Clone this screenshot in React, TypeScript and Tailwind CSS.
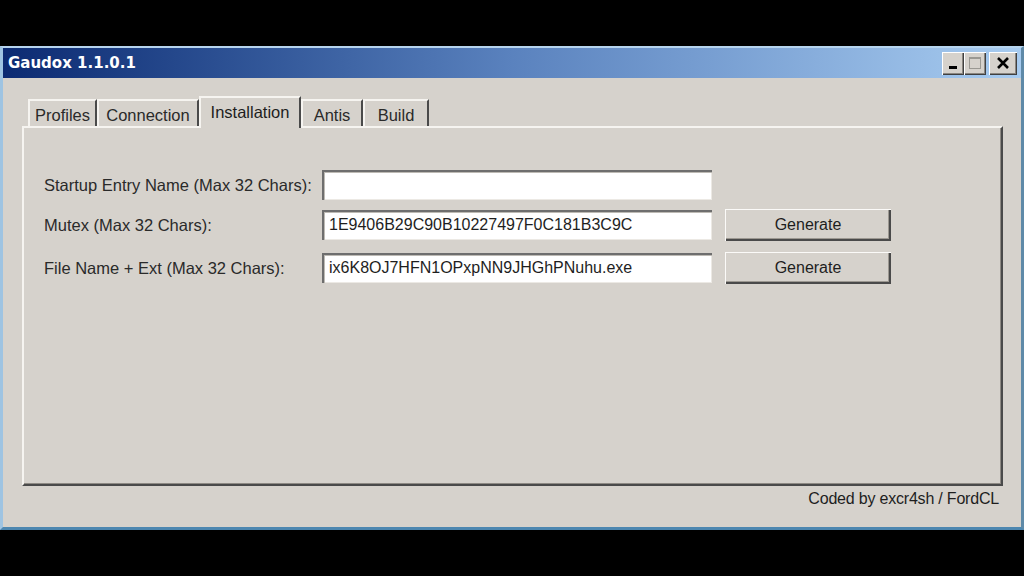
import React from "react";

const font = { fontFamily: '"Liberation Sans", Arial, sans-serif' };

function Tab({ label, w, active }: { label: string; w: number; active?: boolean }) {
  if (active) {
    return (
      <div
        className="relative z-10 flex h-[32px] items-start justify-center bg-[#d6d2cc] pt-[2px] text-[16.5px] text-[#1e1e1e] border-t-2 border-l-2 border-t-[#f6f4f0] border-l-[#f6f4f0] border-r-2 border-r-[#4a4a4a] -mb-[2px]"
        style={{ width: w }}
      >
        {label}
      </div>
    );
  }
  return (
    <div
      className="flex h-[27px] items-start justify-center bg-[#d6d2cc] pt-[2px] text-[16.5px] text-[#2a2a2a] border-t-2 border-l-2 border-t-[#f6f4f0] border-l-[#f6f4f0] border-r-2 border-r-[#4a4a4a]"
      style={{ width: w }}
    >
      {label}
    </div>
  );
}

function Input({ value }: { value: string }) {
  return (
    <div className="flex h-[30px] w-[390px] items-center bg-white pl-[7px] text-[16px] text-[#1e1e1e] shadow-[inset_2px_2px_0_#6e6e6e,inset_3px_3px_0_#bdbab4,inset_-1px_-1px_0_#ece9e4]">
      {value}
    </div>
  );
}

function Button({ label }: { label: string }) {
  return (
    <div className="flex h-[32px] w-[166px] items-center justify-center bg-[#d6d2cc] text-[16px] text-[#1e1e1e] shadow-[inset_1px_1px_0_#fbfaf8,inset_-2px_-2px_0_#4a4a4a,inset_-3px_-3px_0_#9c9891]">
      {label}
    </div>
  );
}

export default function App() {
  return (
    <div className="h-[576px] w-[1024px] overflow-hidden bg-black pt-[46px]" style={font}>
      <div className="flex h-[484px] w-[1024px] flex-col bg-[#d6d2cc] border-l-[3px] border-l-[#9fc4e2] border-r-[3px] border-r-[#5f8aa8] border-t-2 border-t-[#b6d4ee] border-b-[3px] border-b-[#4d87b0]">
        {/* Title bar */}
        <div className="flex h-[30px] shrink-0 items-center bg-gradient-to-r from-[#0c2a72] via-[#5a82be] to-[#a8ccf0] pl-[5px] pr-[4px]">
          <span
            className="text-[15px] font-bold text-white"
            style={{ fontFamily: '"DejaVu Sans", Verdana, sans-serif' }}
          >
            Gaudox 1.1.0.1
          </span>
          <div className="ml-auto flex items-center gap-[0px]">
            <div className="relative h-[23px] w-[22px] bg-[#d6d2cc] shadow-[inset_1px_1px_0_#ffffff,inset_-1px_-1px_0_#404040,inset_-2px_-2px_0_#8a8680]">
              <div className="absolute left-[7px] top-[14px] h-[3px] w-[8px] bg-black" />
            </div>
            <div className="relative h-[23px] w-[22px] bg-[#d6d2cc] shadow-[inset_1px_1px_0_#ffffff,inset_-1px_-1px_0_#404040,inset_-2px_-2px_0_#8a8680]">
              <div className="absolute left-[5px] top-[5px] h-[12px] w-[12px] border border-[#9a9892] border-t-2" />
            </div>
            <div className="ml-[3px] flex h-[23px] w-[28px] items-center justify-center bg-[#d6d2cc] shadow-[inset_1px_1px_0_#ffffff,inset_-1px_-1px_0_#404040,inset_-2px_-2px_0_#8a8680]">
              <svg width="14" height="12" viewBox="0 0 14 12">
                <path d="M2 1 L12 11 M12 1 L2 11" stroke="#000" strokeWidth="2.6" />
              </svg>
            </div>
          </div>
        </div>

        {/* Body */}
        <div className="flex flex-1 flex-col pl-[19px] pr-[18px] pt-[18px]">
          {/* Tabs */}
          <div className="flex items-end pl-[6px]">
            <Tab label="Profiles" w={69} />
            <Tab label="Connection" w={102} />
            <Tab label="Installation" w={102} active />
            <Tab label="Antis" w={62} />
            <Tab label="Build" w={66} />
          </div>
          {/* Tab page */}
          <div className="relative h-[360px] w-[981px] bg-[#d6d2cc] border-t-2 border-l-2 border-t-[#f6f4f0] border-l-[#f6f4f0] border-r-2 border-b-2 border-r-[#4a4a4a] border-b-[#4a4a4a] shadow-[inset_-1px_-1px_0_#8e8a84]">
            <div className="flex flex-col pl-[20px] pt-[42px] text-[16.5px] text-[#2a2a2a]">
              <div className="flex h-[30px] items-center">
                <div className="w-[278px]">Startup Entry Name (Max 32 Chars):</div>
                <Input value="" />
              </div>
              <div className="mt-[9px] flex h-[32px] items-center">
                <div className="w-[278px]">Mutex (Max 32 Chars):</div>
                <Input value="1E9406B29C90B10227497F0C181B3C9C" />
                <div className="ml-[13px]">
                  <Button label="Generate" />
                </div>
              </div>
              <div className="mt-[11px] flex h-[32px] items-center">
                <div className="w-[278px]">File Name + Ext (Max 32 Chars):</div>
                <Input value="ix6K8OJ7HFN1OPxpNN9JHGhPNuhu.exe" />
                <div className="ml-[13px]">
                  <Button label="Generate" />
                </div>
              </div>
            </div>
          </div>
          {/* Footer */}
          <div className="flex justify-end pr-[4px] pt-[1px] text-[16px] tracking-[-0.2px] text-[#1e1e1e]">
            Coded by excr4sh / FordCL
          </div>
        </div>
      </div>
    </div>
  );
}
